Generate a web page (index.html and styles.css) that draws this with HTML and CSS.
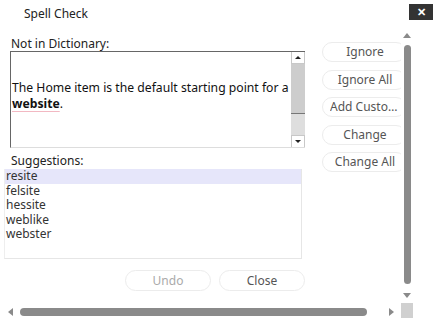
FILE: index.html
```html
<!DOCTYPE html>
<html>
<head>
<meta charset="utf-8">
<link rel="stylesheet" href="styles.css">
</head>
<body>
<div class="window">
  <div class="header">
    <span class="title">Spell Check</span>
    <span class="close-x">✕</span>
  </div>
  <div class="content">
    <div class="left-col">
      <div class="label label-top">Not in Dictionary:</div>
      <div class="textarea">
        <div class="ta-text">The Home item is the default starting point for a <b class="misspelled">website</b>.</div>
        <div class="ta-scroll">
          <div class="ta-btn"><span class="tri-up-small"></span></div>
          <div class="ta-thumb"></div>
          <div class="ta-track"></div>
          <div class="ta-btn ta-btn-down"><span class="tri-down-small"></span></div>
        </div>
      </div>
      <div class="label label-sugg">Suggestions:</div>
      <div class="list">
        <div class="item selected">resite</div>
        <div class="item">felsite</div>
        <div class="item">hessite</div>
        <div class="item">weblike</div>
        <div class="item">webster</div>
      </div>
      <div class="bottom-row">
        <div class="btn disabled">Undo</div>
        <div class="btn">Close</div>
      </div>
    </div>
    <div class="right-col">
      <div class="btn side">Ignore</div>
      <div class="btn side">Ignore All</div>
      <div class="btn side"><span class="ellip">Add Custom Dictionary</span></div>
      <div class="btn side">Change</div>
      <div class="btn side">Change All</div>
    </div>
  </div>
  <div class="vscroll">
    <span class="arrow-up"></span>
    <div class="vthumb"></div>
    <span class="arrow-down"></span>
  </div>
  <div class="spacer"></div>
  <div class="hscroll">
    <span class="arrow-left"></span>
    <div class="hthumb"></div>
    <span class="arrow-right"></span>
  </div>
  <div class="corner"></div>
</div>
</body>
</html>
```

FILE: styles.css
```css
html, body {
  margin: 0;
  padding: 0;
  background: #fff;
}
body {
  width: 438px;
  height: 321px;
  overflow: hidden;
  font-family: "Noto Sans", "Open Sans", sans-serif;
  font-size: 12px;
  color: #222;
}
.window {
  display: grid;
  grid-template-columns: 401px 12px 25px;
  grid-template-rows: 30px 273px 15px 3px;
  width: 438px;
  height: 321px;
}
.header {
  grid-column: 1 / 4;
  grid-row: 1;
  display: flex;
  justify-content: space-between;
  align-items: flex-start;
  padding: 4px 5px 0 24px;
}
.title {
  line-height: 14px;
  padding-top: 3px;
  color: #222;
}
.close-x {
  width: 24px;
  height: 16px;
  background: #333;
  color: #fff;
  font-size: 11px;
  font-weight: bold;
  line-height: 16px;
  text-align: center;
}
.content {
  grid-column: 1;
  grid-row: 2;
  overflow: hidden;
  display: flex;
}
.left-col {
  width: 301px;
  flex: none;
  padding-left: 4px;
  padding-top: 6px;
  display: flex;
  flex-direction: column;
}
.label {
  line-height: 15px;
  padding-left: 7px;
  color: #222;
}
.textarea {
  margin-left: 6px;
  width: 294px;
  height: 95px;
  border-top: 1px solid #666;
  border-left: 1px solid #666;
  border-bottom: 1px solid #ddd;
  display: flex;
}
.ta-text {
  flex: 1;
  padding: 28px 0 0 1px;
  line-height: 16px;
  font-size: 12.2px;
  color: #111;
}
.misspelled {
  text-decoration: underline;
  text-decoration-color: #f2b8c2;
  text-underline-offset: 3px;
}
.ta-scroll {
  width: 14px;
  flex: none;
  display: flex;
  flex-direction: column;
  background: #dcdcdc;
}
.ta-btn {
  height: 11px;
  background: #fff;
  border: 1px solid #c8c8c8;
  border-top: none;
  display: flex;
  align-items: center;
  justify-content: center;
}
.ta-btn-down {
  border-top: 1px solid #c8c8c8;
  border-bottom: none;
}
.tri-up-small {
  width: 0;
  height: 0;
  border-left: 3px solid transparent;
  border-right: 3px solid transparent;
  border-bottom: 3px solid #222;
}
.tri-down-small {
  width: 0;
  height: 0;
  border-left: 3px solid transparent;
  border-right: 3px solid transparent;
  border-top: 3px solid #222;
}
.ta-thumb {
  height: 49px;
  background: #cdcdcd;
  border-bottom: 1px solid #777;
}
.ta-track {
  flex: 1;
  background: #dedede;
}
.label-sugg {
  margin-top: 5px;
  line-height: 16px;
}
.list {
  height: 89px;
  width: 296px;
  border: 1px solid #e6e6e6;
  border-top: none;
  border-left: 1px solid #eee;
}
.item {
  height: 14.6px;
  line-height: 14.6px;
  padding-left: 1px;
  color: #333;
}
.item.selected {
  background: #e6e6fa;
}
.bottom-row {
  display: flex;
  justify-content: flex-end;
  gap: 8px;
  margin-top: 11px;
}
.btn {
  height: 21px;
  width: 86px;
  box-sizing: border-box;
  border: 1px solid #ececec;
  border-radius: 11px;
  background: #fff;
  color: #555;
  text-align: center;
  line-height: 19px;
  white-space: nowrap;
  overflow: hidden;
}
.btn.disabled {
  color: #aaa;
}
.right-col {
  flex: none;
  margin-left: 17px;
  padding-top: 12px;
  display: flex;
  flex-direction: column;
  gap: 7.5px;
}
.btn.side {
  width: 84px;
  height: 20px;
  line-height: 18px;
  padding: 0 5px 0 7px;
}
.ellip {
  display: block;
  overflow: hidden;
  text-overflow: ellipsis;
}
.vscroll {
  grid-column: 2;
  grid-row: 2;
  display: flex;
  flex-direction: column;
  align-items: center;
  padding-top: 3px;
}
.arrow-up {
  width: 0;
  height: 0;
  border-left: 4px solid transparent;
  border-right: 4px solid transparent;
  border-bottom: 5px solid #8a8a8a;
}
.vthumb {
  margin-top: 7px;
  width: 7px;
  height: 239px;
  background: #8a8a8a;
  border-radius: 4px;
}
.arrow-down {
  margin-top: 9px;
  width: 0;
  height: 0;
  border-left: 4px solid transparent;
  border-right: 4px solid transparent;
  border-top: 5px solid #8a8a8a;
}
.spacer {
  grid-column: 3;
  grid-row: 2 / 5;
}
.hscroll {
  grid-column: 1;
  grid-row: 3;
  display: flex;
  align-items: center;
  padding-left: 8px;
  padding-top: 3px;
}
.arrow-left {
  width: 0;
  height: 0;
  border-top: 4px solid transparent;
  border-bottom: 4px solid transparent;
  border-right: 5px solid #8a8a8a;
}
.hthumb {
  margin-left: 7px;
  width: 347px;
  height: 8px;
  background: #8a8a8a;
  border-radius: 4px;
}
.arrow-right {
  margin-left: 22px;
  width: 0;
  height: 0;
  border-top: 4px solid transparent;
  border-bottom: 4px solid transparent;
  border-left: 5px solid #8a8a8a;
}
.corner {
  grid-column: 2;
  grid-row: 3;
  background: #d0d0d0;
}
```
